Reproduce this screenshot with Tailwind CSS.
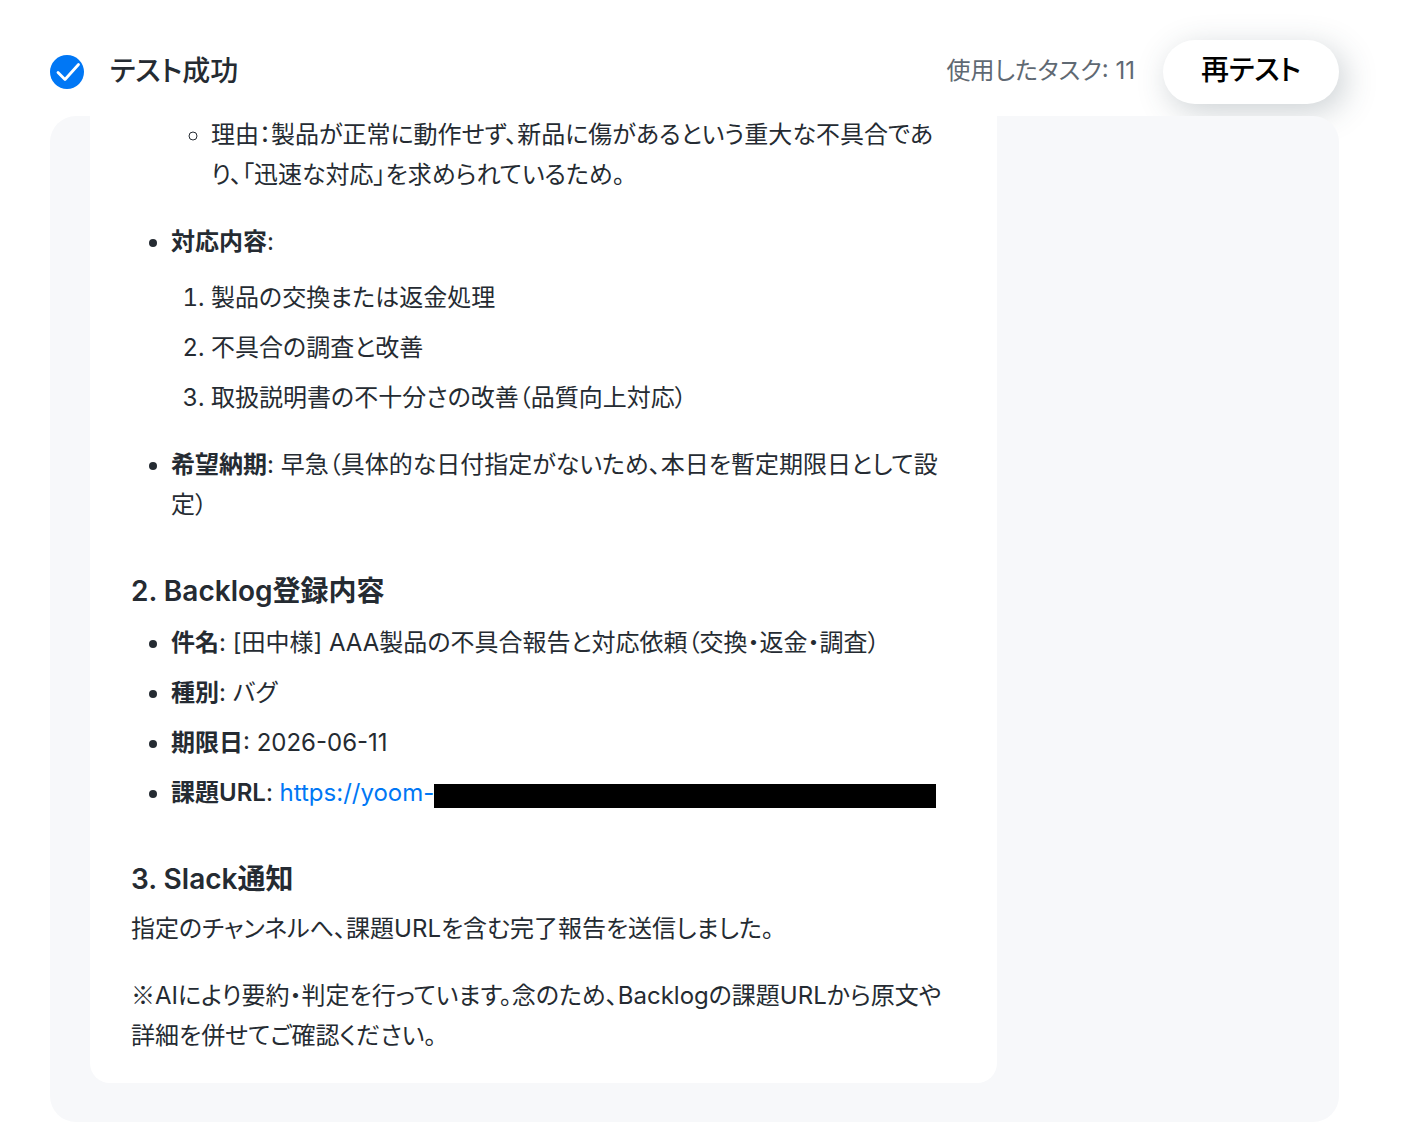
<!DOCTYPE html>
<html lang="ja">
<head>
    <meta charset="UTF-8">
    <meta name="viewport" content="width=device-width, initial-scale=1.0">
    <title>テスト成功</title>
    <script src="https://cdn.jsdelivr.net/npm/@tailwindcss/browser@4"></script>
    <style>
        body {
            font-family: Inter, 'Noto Sans CJK JP', sans-serif;
            font-feature-settings: 'palt';
        }
    </style>
</head>
<body class="flex h-screen flex-col bg-white px-[50px] text-[#252b32]">
    <!-- Header -->
    <header class="flex shrink-0 items-center pt-10 pb-3">
        <svg class="h-[34px] w-[34px] shrink-0" viewBox="0 0 34 34" fill="none" aria-hidden="true">
            <circle cx="17" cy="17" r="17" fill="#0077f5"/>
            <path d="M8 17.5 L15 24.5 L28.5 9.5" stroke="#fff" stroke-width="2.8" stroke-linecap="round" stroke-linejoin="round"/>
        </svg>
        <h1 class="ml-[26px] pb-0.5 text-[28px] leading-10 font-medium">テスト成功</h1>
        <p class="ml-auto pb-0.5 text-2xl leading-10 text-[#5f6973]">使用したタスク: 11</p>
        <button type="button" class="ml-7 mr-[15px] h-16 w-44 rounded-full bg-white pb-1 text-[28px] font-medium text-black shadow-[6px_8px_32px_rgba(52,72,84,0.25)]">再テスト</button>
    </header>

    <!-- Result panel, scrolled to the end -->
    <main class="relative mr-[15px] flex min-h-0 flex-1 flex-col justify-end overflow-hidden rounded-[26px] bg-[#f7f8fa] px-10 pb-[39px]">
        <article class="w-3/4 shrink-0 rounded-b-[20px] bg-white px-[41px] pb-[27px] text-2xl leading-10">
            <ul class="list-disc pl-10">
                <li class="list-none">
                    <ul class="list-[circle] pl-10">
                        <li>理由：製品が正常に動作せず、新品に傷があるという重大な不具合であり、「迅速な対応」を求められているため。</li>
                    </ul>
                </li>
                <li class="mt-[27px]">
                    <strong class="font-semibold">対応内容</strong>:
                    <ol class="mt-4 list-decimal space-y-[10px] pl-10">
                        <li>製品の交換または返金処理</li>
                        <li>不具合の調査と改善</li>
                        <li>取扱説明書の不十分さの改善（品質向上対応）</li>
                    </ol>
                </li>
                <li class="mt-[27px]"><strong class="font-semibold">希望納期</strong>: 早急（具体的な日付指定がないため、本日を暫定期限日として設定）</li>
            </ul>

            <h2 class="mt-[46px] text-[28px] leading-10 font-semibold">2. Backlog登録内容</h2>
            <ul class="mt-3 list-disc space-y-[10px] pl-10">
                <li><strong class="font-semibold">件名</strong>: [田中様] AAA製品の不具合報告と対応依頼（交換・返金・調査）</li>
                <li><strong class="font-semibold">種別</strong>: バグ</li>
                <li><strong class="font-semibold">期限日</strong>: 2026-06-11</li>
                <li><strong class="font-semibold">課題URL</strong>: <a href="#" class="text-[#0077f5]">https://yoom-<span class="inline-block h-6 w-[502px] bg-black align-[-7px]"></span></a></li>
            </ul>

            <h2 class="mt-[46px] text-[28px] leading-10 font-semibold">3. Slack通知</h2>
            <p class="mt-[10px]">指定のチャンネルへ、課題URLを含む完了報告を送信しました。</p>
            <p class="mt-[25px]"><span class="font-['Noto_Sans_CJK_JP']">※</span>AIにより要約・判定を行っています。念のため、Backlogの課題URLから原文や詳細を併せてご確認ください。</p>
        </article>
    </main>
</body>
</html>
